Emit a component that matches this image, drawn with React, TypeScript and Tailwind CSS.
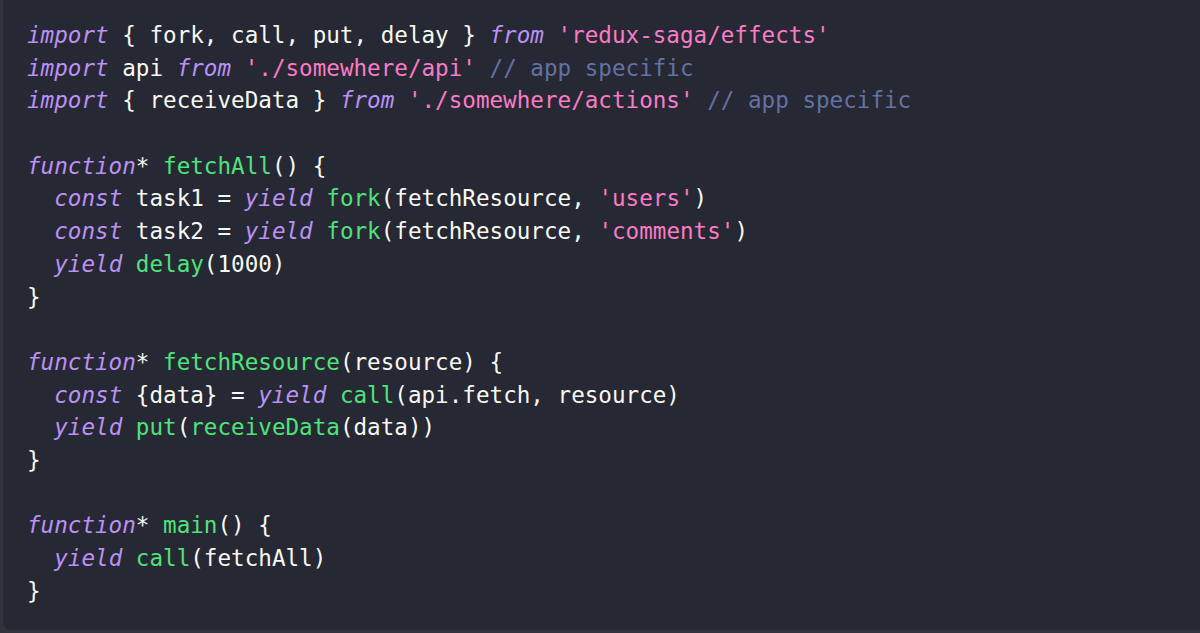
import React from "react";

type Tok = [string, string?];

const K = "text-[#bb91f6] italic";
const S = "text-[#fa7bc6]";
const F = "text-[#4fe37c]";
const C = "text-[#6272a4]";

const lines: Tok[][] = [
  [["import", K], [" { fork, call, put, delay } "], ["from", K], [" "], ["'redux-saga/effects'", S]],
  [["import", K], [" api "], ["from", K], [" "], ["'./somewhere/api'", S], [" "], ["// app specific", C]],
  [["import", K], [" { receiveData } "], ["from", K], [" "], ["'./somewhere/actions'", S], [" "], ["// app specific", C]],
  [],
  [["function", K], ["* "], ["fetchAll", F], ["() {"]],
  [["  "], ["const", K], [" task1 = "], ["yield", K], [" "], ["fork", F], ["(fetchResource, "], ["'users'", S], [")"]],
  [["  "], ["const", K], [" task2 = "], ["yield", K], [" "], ["fork", F], ["(fetchResource, "], ["'comments'", S], [")"]],
  [["  "], ["yield", K], [" "], ["delay", F], ["(1000)"]],
  [["}"]],
  [],
  [["function", K], ["* "], ["fetchResource", F], ["(resource) {"]],
  [["  "], ["const", K], [" {data} = "], ["yield", K], [" "], ["call", F], ["(api.fetch, resource)"]],
  [["  "], ["yield", K], [" "], ["put", F], ["("], ["receiveData", F], ["(data))"]],
  [["}"]],
  [],
  [["function", K], ["* "], ["main", F], ["() {"]],
  [["  "], ["yield", K], [" "], ["call", F], ["(fetchAll)"]],
  [["}"]],
];

export default function App() {
  return (
    <div className="w-[1200px] h-[633px] bg-[#30323c] overflow-hidden">
      <div className="ml-[3px] h-[630px] bg-[#262833] rounded-bl-[8px] pl-[24px] pt-[19px]">
        <pre
          className="m-0 text-[22.6px] leading-[32.7px] text-[#f8f8f2] whitespace-pre"
          style={{ fontFamily: '"DejaVu Sans Mono", monospace' }}
        >
          {lines.map((ln, i) => (
            <div key={i} className="h-[32.7px]">
              {ln.map(([t, cls], j) => (
                <span key={j} className={cls}>
                  {t}
                </span>
              ))}
            </div>
          ))}
        </pre>
      </div>
    </div>
  );
}
